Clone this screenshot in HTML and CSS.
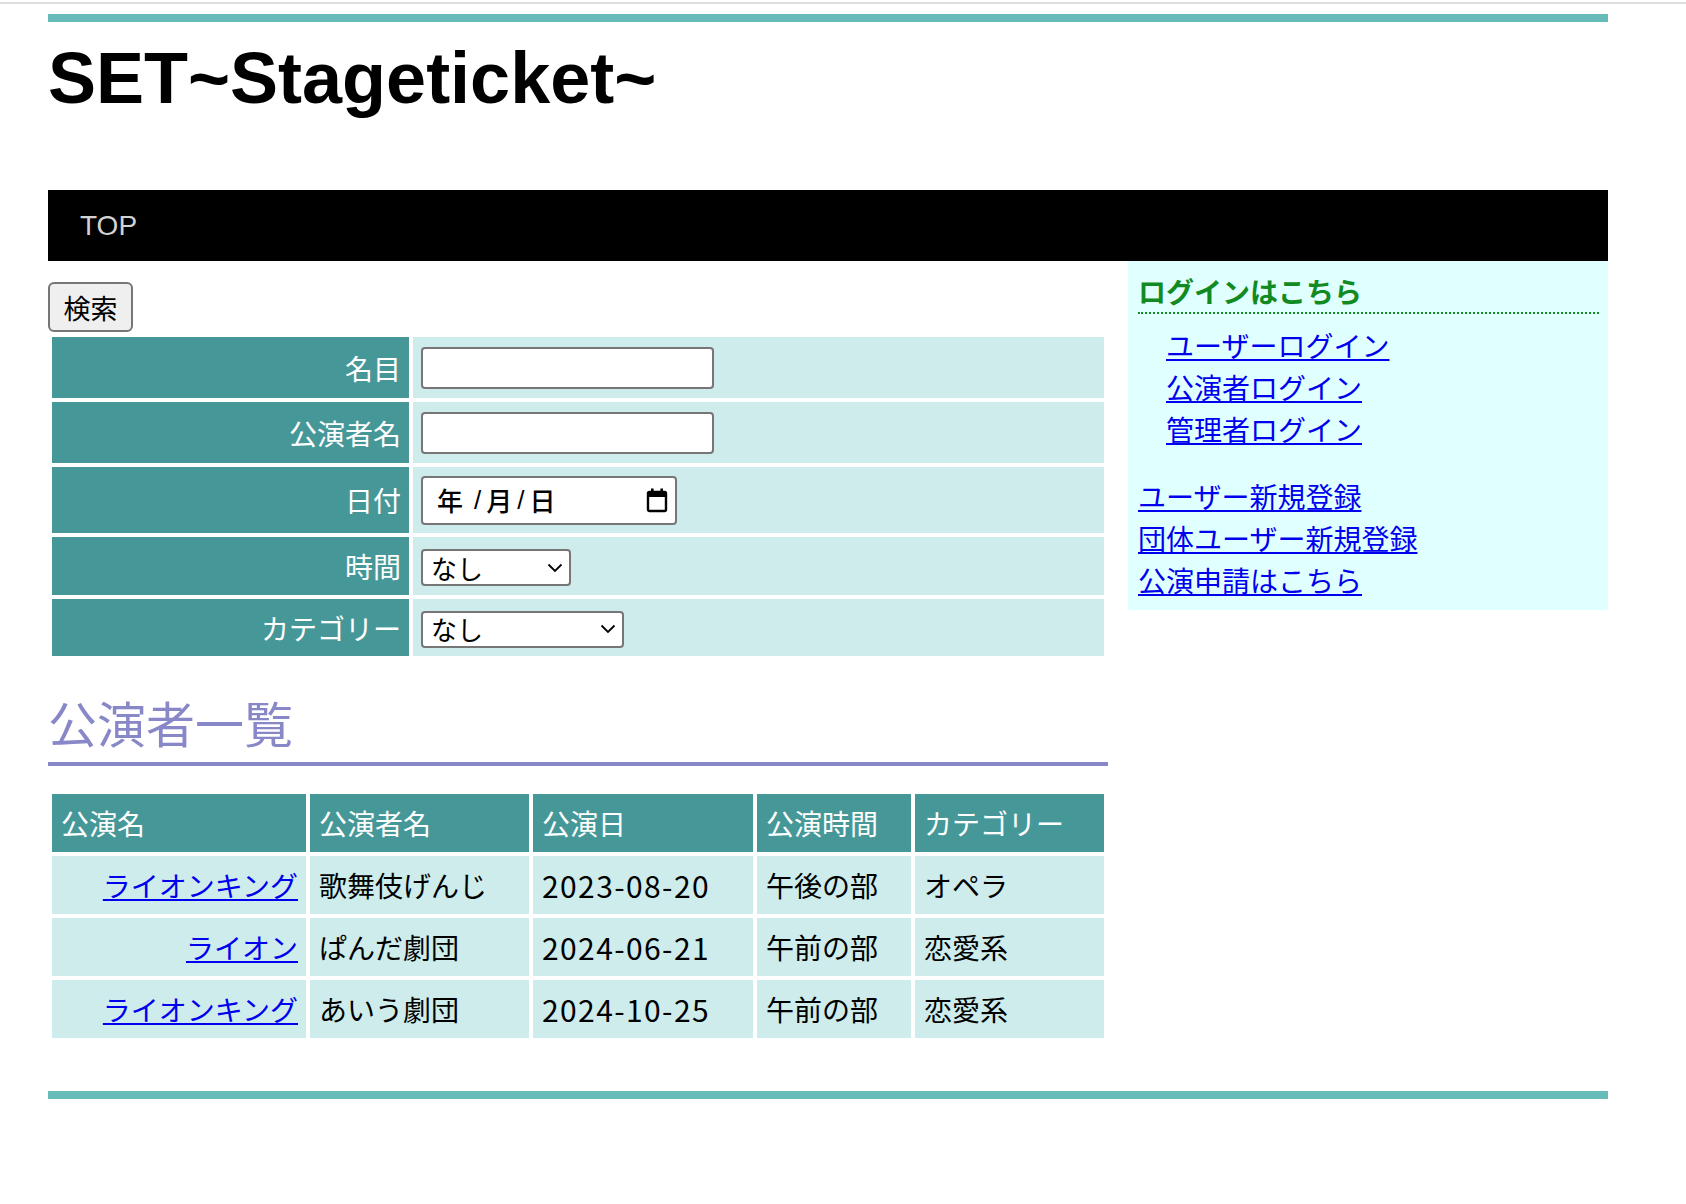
FILE: index.html
```html
<!DOCTYPE html>
<html lang="ja">
<head>
<meta charset="utf-8">
<title>SET~Stageticket~</title>
<link rel="stylesheet" href="styles.css">
</head>
<body>
<div class="topline"></div>
<div class="wrap">
  <div class="bar"></div>
  <h1 class="title">SET~Stageticket~</h1>
  <nav class="nav"><a class="nav-link" href="#">TOP</a></nav>
  <div class="cols">
    <main class="main">
      <button class="btn" type="button">検索</button>
      <table class="form">
        <tr class="row-text">
          <th>名目</th>
          <td><input class="text-input" type="text"></td>
        </tr>
        <tr class="row-text">
          <th>公演者名</th>
          <td><input class="text-input" type="text"></td>
        </tr>
        <tr class="row-date">
          <th>日付</th>
          <td>
            <div class="date-field">
              <span class="d-part">年</span><span class="d-sep">/</span><span class="d-part">月</span><span class="d-sep">/</span><span class="d-part">日</span>
              <svg class="cal" width="22" height="26" viewBox="0 0 22 26"><rect x="2" y="5" width="18" height="19" rx="1.5" fill="none" stroke="#000" stroke-width="2.4"/><rect x="2" y="5" width="18" height="5" fill="#000"/><rect x="5" y="1.5" width="2.6" height="4" fill="#000"/><rect x="14.4" y="1.5" width="2.6" height="4" fill="#000"/></svg>
            </div>
          </td>
        </tr>
        <tr class="row-time">
          <th>時間</th>
          <td>
            <div class="select-field sel-time"><span>なし</span><svg class="chev" width="16" height="10" viewBox="0 0 16 10"><polyline points="1.5,1.5 8,8 14.5,1.5" fill="none" stroke="#000" stroke-width="1.8"/></svg></div>
          </td>
        </tr>
        <tr class="row-cat">
          <th>カテゴリー</th>
          <td>
            <div class="select-field sel-cat"><span>なし</span><svg class="chev" width="16" height="10" viewBox="0 0 16 10"><polyline points="1.5,1.5 8,8 14.5,1.5" fill="none" stroke="#000" stroke-width="1.8"/></svg></div>
          </td>
        </tr>
      </table>

      <h2 class="heading">公演者一覧</h2>

      <table class="list">
        <thead>
          <tr>
            <th class="c1">公演名</th>
            <th class="c2">公演者名</th>
            <th class="c3">公演日</th>
            <th class="c4">公演時間</th>
            <th class="c5">カテゴリー</th>
          </tr>
        </thead>
        <tbody>
          <tr>
            <td class="name"><a href="#">ライオンキング</a></td>
            <td>歌舞伎げんじ</td>
            <td class="date">2023-08-20</td>
            <td>午後の部</td>
            <td>オペラ</td>
          </tr>
          <tr>
            <td class="name"><a href="#">ライオン</a></td>
            <td>ぱんだ劇団</td>
            <td class="date">2024-06-21</td>
            <td>午前の部</td>
            <td>恋愛系</td>
          </tr>
          <tr>
            <td class="name"><a href="#">ライオンキング</a></td>
            <td>あいう劇団</td>
            <td class="date">2024-10-25</td>
            <td>午前の部</td>
            <td>恋愛系</td>
          </tr>
        </tbody>
      </table>
    </main>

    <aside class="side">
      <h3 class="side-title">ログインはこちら</h3>
      <ul class="login-list">
        <li><a href="#">ユーザーログイン</a></li>
        <li><a href="#">公演者ログイン</a></li>
        <li><a href="#">管理者ログイン</a></li>
      </ul>
      <ul class="reg-list">
        <li><a href="#">ユーザー新規登録</a></li>
        <li><a href="#">団体ユーザー新規登録</a></li>
        <li><a href="#">公演申請はこちら</a></li>
      </ul>
    </aside>
  </div>
  <div class="bar bar-bottom"></div>
</div>
</body>
</html>
```

FILE: styles.css
```css
html, body {
  margin: 0;
  padding: 0;
  background: #fff;
}

body {
  font-family: "Noto Sans CJK JP", "Liberation Sans", sans-serif;
  color: #000;
  font-size: 28px;
}

.topline {
  height: 2px;
  margin-top: 2px;
  background: #dedede;
}

.wrap {
  width: 1560px;
  margin-left: 48px;
  padding-top: 10px;
  padding-bottom: 100px;
}

.bar {
  height: 8px;
  background: #67bcb9;
}

.bar-bottom {
  margin-top: 49px;
}

.title {
  margin: 20px 0 76px;
  font-family: "Liberation Sans", Arial, sans-serif;
  font-weight: bold;
  font-size: 72px;
  line-height: 72px;
}

.nav {
  height: 71px;
  background: #000;
  display: flex;
  align-items: center;
  padding-left: 32px;
}

.nav-link {
  font-family: "Liberation Sans", Arial, sans-serif;
  color: #d2d2d2;
  font-size: 28px;
  line-height: 28px;
  text-decoration: none;
}

.cols {
  display: flex;
  gap: 20px;
  align-items: flex-start;
}

.main {
  width: 1060px;
}

.btn {
  display: block;
  margin: 21px 0 0;
  width: 85px;
  height: 50px;
  padding: 0;
  box-sizing: border-box;
  border: 2px solid #767676;
  border-radius: 6px;
  background: #efefef;
  color: #000;
  font-family: "Noto Sans CJK JP", sans-serif;
  font-size: 27px;
  line-height: 1;
}

.form {
  width: 1060px;
  margin-top: 1px;
  border-spacing: 4px;
  table-layout: fixed;
}

.form th {
  width: 357px;
  box-sizing: border-box;
  background: #469898;
  color: #fff;
  font-weight: normal;
  text-align: right;
  padding: 0 8px 0 0;
  font-size: 28px;
  line-height: 40px;
}

.form td {
  background: #cdeceb;
  padding: 0 8px;
  line-height: 40px;
}

.row-text { height: 61px; }
.row-date { height: 66px; }
.row-time { height: 58px; }
.row-cat { height: 57px; }

.text-input {
  display: block;
  width: 293px;
  height: 42px;
  box-sizing: border-box;
  border: 2px solid #767676;
  border-radius: 4px;
  background: #fff;
  margin: 1px 0 0;
  padding: 0 6px;
  font-size: 24px;
}

.date-field {
  display: flex;
  align-items: center;
  width: 256px;
  height: 49px;
  box-sizing: border-box;
  border: 2px solid #767676;
  border-radius: 4px;
  background: #fff;
  padding: 0 7px 0 14px;
  font-size: 26px;
  line-height: 1;
  font-weight: 500;
}

.d-sep {
  font-family: "Liberation Sans", sans-serif;
  margin: 0 5px;
}

.d-part:first-child {
  margin-right: 6px;
}

.cal {
  margin-left: auto;
}

.select-field {
  display: flex;
  align-items: center;
  height: 37px;
  box-sizing: border-box;
  border: 2px solid #767676;
  border-radius: 4px;
  background: #fff;
  padding: 0 6px 0 8px;
  margin-top: 3px;
  font-size: 26px;
  line-height: 1;
}

.sel-time { width: 150px; }
.sel-cat { width: 203px; }

.chev {
  margin-left: auto;
}

.heading {
  margin: 27px 0 0;
  font-size: 49px;
  font-weight: normal;
  line-height: 70px;
  color: #8887c8;
  padding-bottom: 5px;
  border-bottom: 4px solid #8887c8;
}

.list {
  width: 1060px;
  margin-top: 24px;
  border-spacing: 4px;
  table-layout: fixed;
}

.list th,
.list td {
  box-sizing: border-box;
  height: 58px;
  font-size: 28px;
  line-height: 40px;
  padding: 0 8px 0 9px;
  text-align: left;
  vertical-align: middle;
}

.list th {
  background: #469898;
  color: #fff;
  font-weight: normal;
}

.list td {
  background: #cdeceb;
}

.list .c1 { width: 254px; }
.list .c2 { width: 219px; }
.list .c3 { width: 220px; }
.list .c4 { width: 154px; }
.list .c5 { width: 189px; }

.list td.name {
  text-align: right;
  padding-right: 8px;
}

.list td.date {
  font-size: 30px;
  letter-spacing: 1.4px;
}

a {
  color: #0000ee;
  text-decoration: underline;
}

.side {
  width: 480px;
  box-sizing: border-box;
  background: #e0ffff;
  padding: 9px 9px 9px 10px;
}

.side-title {
  margin: 0;
  font-size: 28px;
  line-height: 42px;
  font-weight: bold;
  color: #118a22;
  border-bottom: 2px dotted #118a22;
}

.login-list,
.reg-list {
  list-style: none;
  margin: 0;
  padding: 0;
  font-size: 28px;
  line-height: 42px;
}

.login-list {
  margin-top: 10px;
  padding-left: 28px;
}

.reg-list {
  margin-top: 25px;
}
```
